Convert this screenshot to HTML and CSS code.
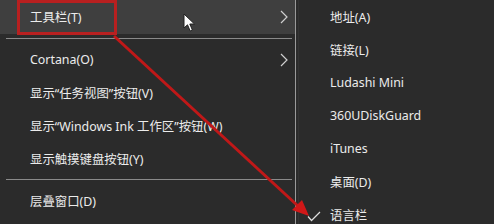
FILE: index.html
```html
<!DOCTYPE html>
<html lang="zh-CN">
<head>
<meta charset="utf-8">
<link rel="stylesheet" href="styles.css">
</head>
<body>
<div class="screen">
  <div class="menu">
    <div class="item active"><span>工具栏(T)</span><svg class="chev" width="8" height="14" viewBox="0 0 8 14"><polyline points="1,1 7,7 1,13" fill="none" stroke="#d0d0d0" stroke-width="1.2"/></svg></div>
    <div class="sep"></div>
    <div class="item"><span>Cortana(O)</span><svg class="chev" width="8" height="14" viewBox="0 0 8 14"><polyline points="1,1 7,7 1,13" fill="none" stroke="#d0d0d0" stroke-width="1.2"/></svg></div>
    <div class="item"><span>显示“任务视图”按钮(V)</span></div>
    <div class="item"><span>显示“Windows Ink 工作区”按钮(W)</span></div>
    <div class="item"><span>显示触摸键盘按钮(Y)</span></div>
    <div class="sep"></div>
    <div class="item"><span>层叠窗口(D)</span></div>
  </div>
  <div class="submenu">
    <div class="sitem">地址(A)</div>
    <div class="sitem">链接(L)</div>
    <div class="sitem">Ludashi Mini</div>
    <div class="sitem">360UDiskGuard</div>
    <div class="sitem">iTunes</div>
    <div class="sitem">桌面(D)</div>
    <div class="sitem checked"><svg class="check" width="14" height="11" viewBox="0 0 14 11"><polyline points="1,5.5 4.5,9.5 13,1" fill="none" stroke="#e0e0e0" stroke-width="1.2"/></svg>语言栏</div>
  </div>
  <svg class="annot" width="494" height="224" viewBox="0 0 494 224">
    <rect x="18.5" y="1.5" width="97" height="32" fill="none" stroke="#b82020" stroke-width="3"/>
    <line x1="114" y1="36" x2="298" y2="206" stroke="#c01818" stroke-width="3"/>
    <polygon points="309,216 292,210 302,200" fill="#d01818"/>
  </svg>
  <svg class="cursor" width="13" height="20" viewBox="0 0 13 20">
    <path d="M1,1 L1,15 L4.5,11.8 L7.2,18 L9.4,17 L6.8,11 L11.5,11 Z" fill="#ffffff" stroke="#222" stroke-width="1"/>
  </svg>
</div>
</body>
</html>
```
FILE: styles.css
```css
html, body {
  margin: 0;
  padding: 0;
  background: #2b2b2b;
}
.screen {
  position: relative;
  width: 494px;
  height: 224px;
  overflow: hidden;
  display: flex;
  font-family: "Noto Sans", "Noto Sans CJK SC", sans-serif;
  font-size: 12.4px;
  color: #ececec;
}
.menu {
  width: 295px;
  border-right: 1px solid #9a9a9a;
  display: flex;
  flex-direction: column;
  flex-shrink: 0;
}
.item {
  height: 33px;
  flex-shrink: 0;
  display: flex;
  align-items: center;
  justify-content: space-between;
  padding: 0 7px 0 30px;
  white-space: nowrap;
}
.item.active {
  height: 34px;
  background: #3f3f3f;
}
.sep {
  height: 1px;
  flex-shrink: 0;
  margin: 4px 3px 4px 6px;
  background: #8a8a8a;
}
.chev {
  display: block;
}
.submenu {
  margin-left: 2px;
  border-left: 1px solid #333;
  flex: 1;
  display: flex;
  flex-direction: column;
}
.sitem {
  height: 33px;
  flex-shrink: 0;
  display: flex;
  align-items: center;
  padding-left: 31px;
  white-space: nowrap;
}
.sitem.checked {
  padding-left: 8px;
}
.check {
  display: block;
  margin-right: 9px;
  margin-top: 3px;
}
.annot {
  position: absolute;
  left: 0;
  top: 0;
}
.cursor {
  position: absolute;
  left: 183px;
  top: 13px;
}
```
